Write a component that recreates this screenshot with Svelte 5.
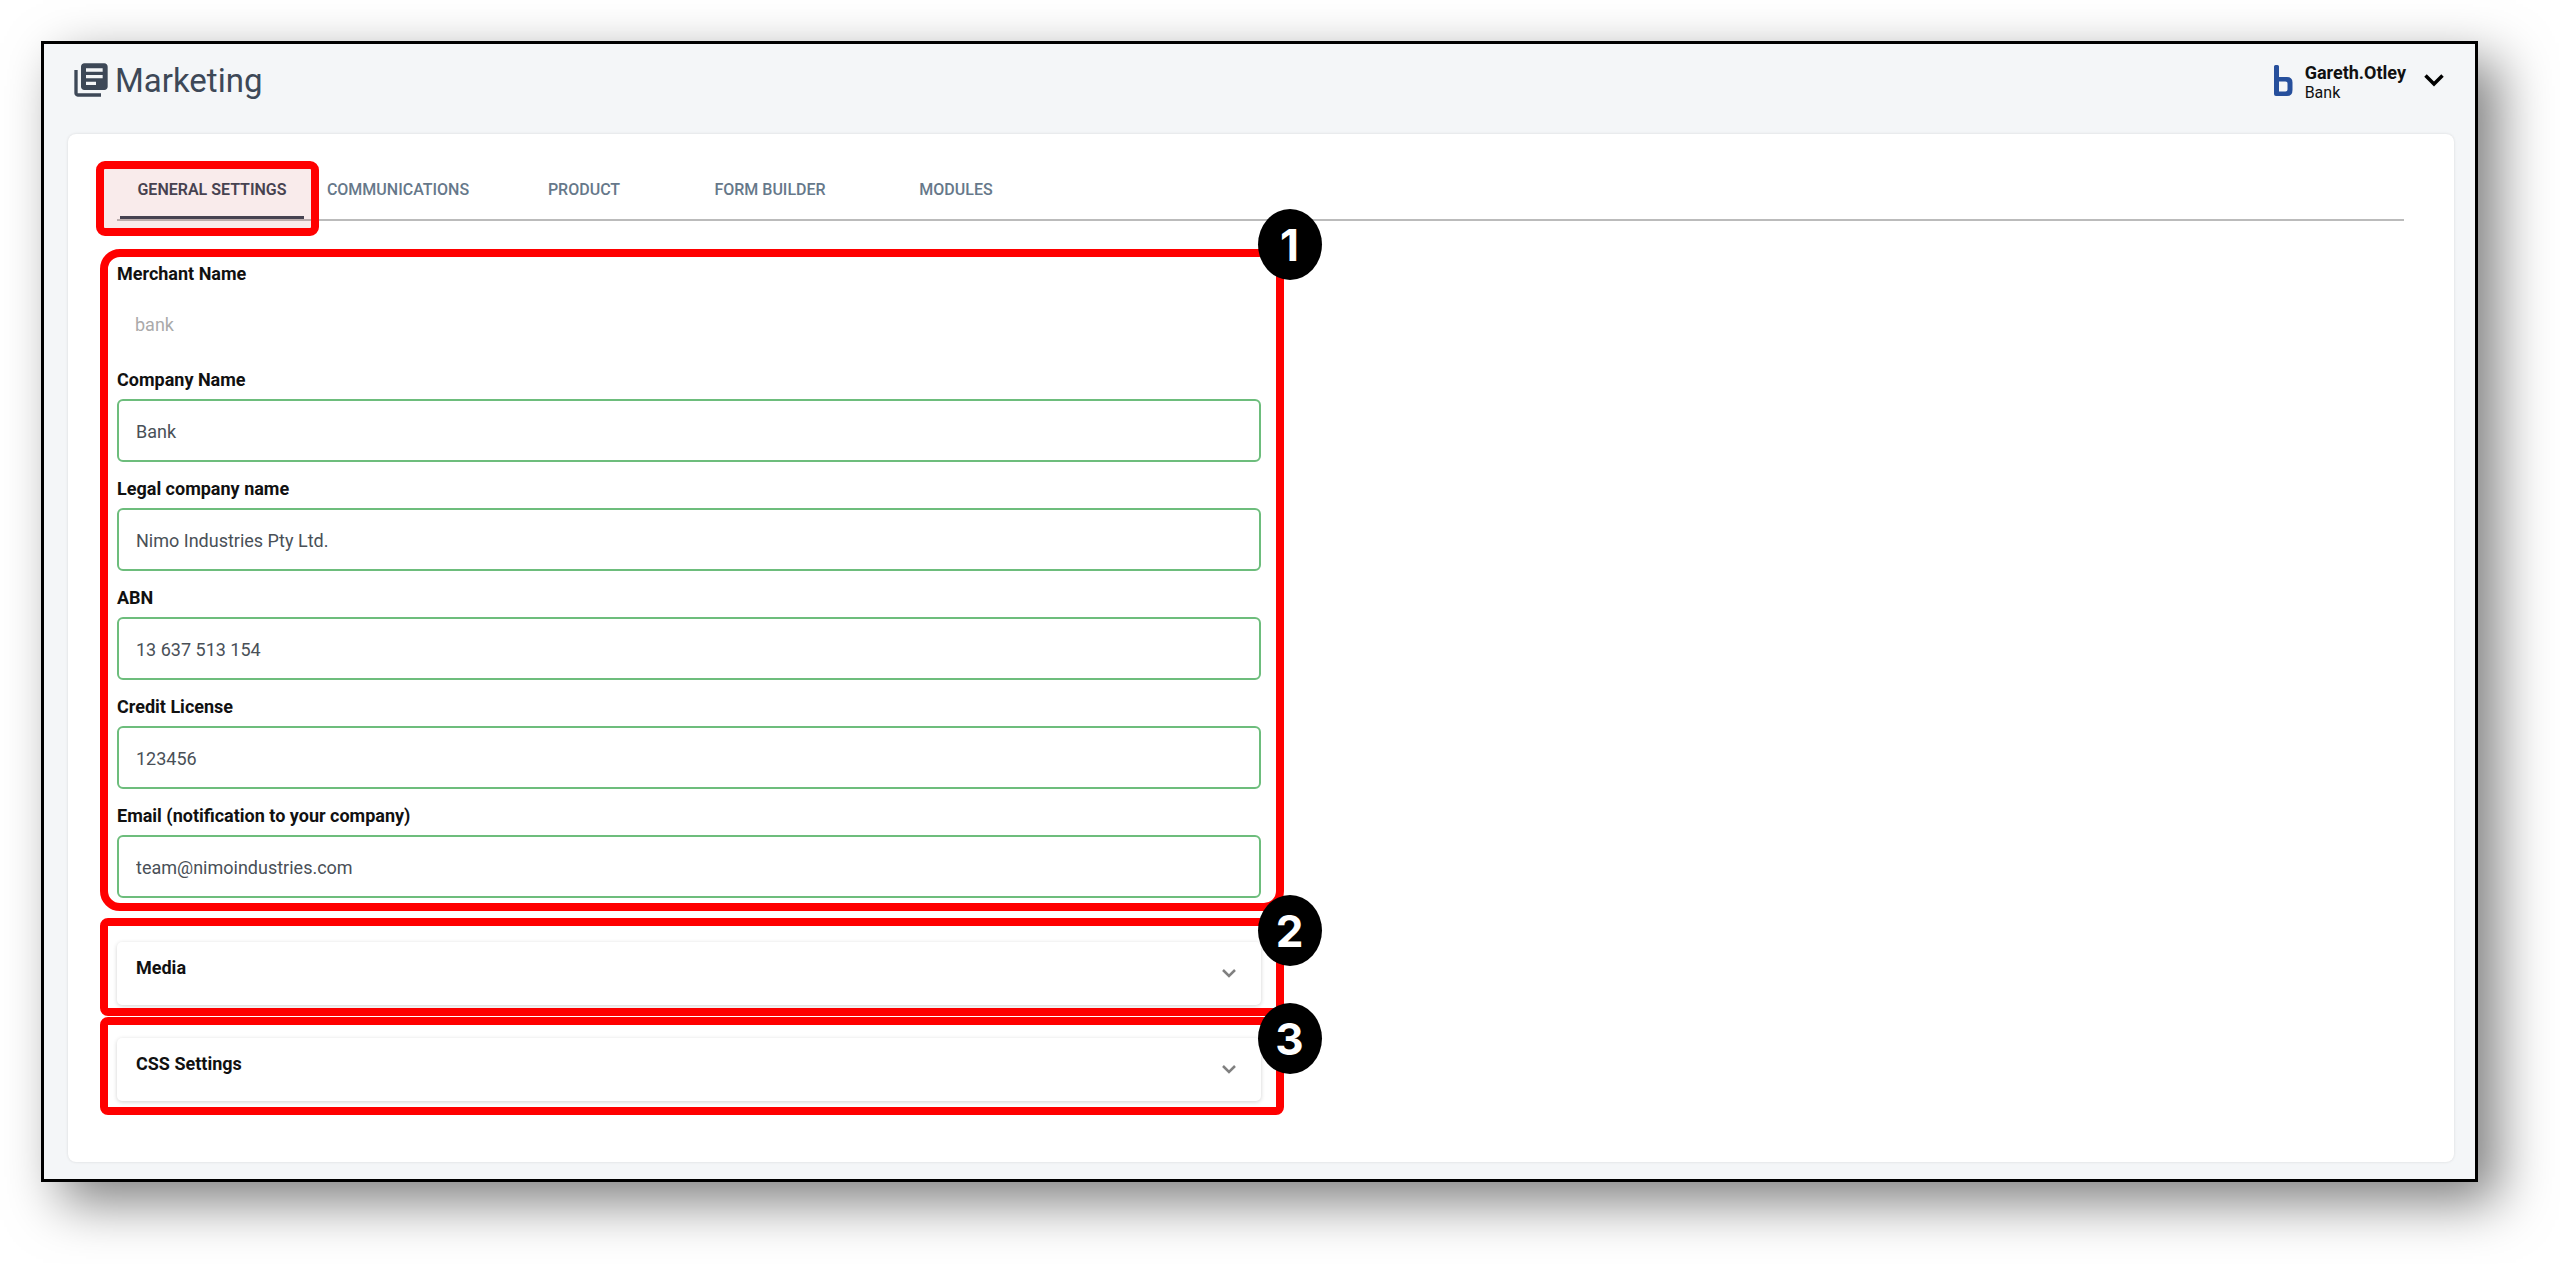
<script lang="ts">
  type Field = { id: string; label: string; value: string; type?: string; disabled?: boolean };

  const tabs = ['General Settings', 'Communications', 'Product', 'Form Builder', 'Modules'];
  let activeTab = $state(tabs[0]);

  let fields = $state<Field[]>([
    { id: 'merchant-name', label: 'Merchant Name', value: 'bank', disabled: true },
    { id: 'company-name', label: 'Company Name', value: 'Bank' },
    { id: 'legal-name', label: 'Legal company name', value: 'Nimo Industries Pty Ltd.' },
    { id: 'abn', label: 'ABN', value: '13 637 513 154' },
    { id: 'credit-license', label: 'Credit License', value: '123456' },
    { id: 'email', label: 'Email (notification to your company)', value: 'team@nimoindustries.com', type: 'email' },
  ]);
</script>

{#snippet panel(title: string)}
  <button class="panel" type="button" aria-expanded="false">
    <span>{title}</span>
    <svg width="14" height="9" viewBox="0 0 14 9" aria-hidden="true">
      <path d="M1 1l6 6 6-6" fill="none" stroke="#808080" stroke-width="2.500" />
    </svg>
  </button>
{/snippet}

<div class="page">
  <div class="window">
    <header>
      <h1>
        <svg width="40" height="40" viewBox="0 0 24 24" aria-hidden="true">
          <path
            fill="currentColor"
            d="M4 6H2v14c0 1.1.9 2 2 2h14v-2H4V6zm16-4H8c-1.1 0-2 .9-2 2v12c0 1.1.9 2 2 2h12c1.1 0 2-.9 2-2V4c0-1.1-.9-2-2-2zm-1 9H9V9h10v2zm-4 4H9v-2h6v2zm4-8H9V5h10v2z"
          />
        </svg>
        Marketing
      </h1>

      <button class="account" type="button">
        <svg width="19" height="31" viewBox="0 0 19 31" aria-hidden="true">
          <path
            fill="#264f9c"
            fill-rule="evenodd"
            d="M0 1.500Q0 0 1.500 0H3.500Q5 0 5 1.500V12H13Q18.500 12 18.500 17.500V25Q18.500 31 13 31H2Q0 31 0 29ZM5 16.500V26.500H11.500Q13.500 26.500 13.500 24.500V18.500Q13.500 16.500 11.500 16.500Z"
          />
        </svg>
        <span class="who">
          <strong>Gareth.Otley</strong>
          <small>Bank</small>
        </span>
        <svg width="20" height="13" viewBox="0 0 20 13" aria-hidden="true">
          <path d="M1.500 1.500L10 10l8.500-8.500" fill="none" stroke="#000" stroke-width="3.500" />
        </svg>
      </button>
    </header>

    <main>
      <nav>
        {#each tabs as tab, i (tab)}
          <button
            type="button"
            class:active={tab === activeTab}
            class:marked={i === 0}
            onclick={() => (activeTab = tab)}
          >
            {tab}
          </button>
        {/each}
      </nav>

      <div class="steps">
        <section class="step form">
          <span class="badge">1</span>
          {#each fields as field (field.id)}
            <div class="field">
              <label for={field.id}>{field.label}</label>
              <input id={field.id} type={field.type ?? 'text'} bind:value={field.value} disabled={field.disabled} />
            </div>
          {/each}
        </section>

        <section class="step media">
          <span class="badge">2</span>
          {@render panel('Media')}
        </section>

        <section class="step css">
          <span class="badge">3</span>
          {@render panel('CSS Settings')}
        </section>
      </div>
    </main>
  </div>
</div>

<style>
  :global(body) { background: #fff; }

  * { box-sizing: border-box; }

  button, input { font: inherit; color: inherit; }
  button { background: none; border: 0; padding: 0; cursor: pointer; }

  /* extra room on the right and bottom for the drop shadow */
  .page { padding: 41px 82px 82px 41px; }

  .window {
    padding: 0 21px 17px 24px;
    background: #f4f6f8;
    border: 3px solid #000;
    box-shadow: 20px 20px 50px rgba(0, 0, 0, 0.5);
    font-family: Roboto, sans-serif;
    font-size: 18px;
  }

  header { display: flex; justify-content: space-between; height: 90px; }

  h1 {
    display: flex; align-items: center; gap: 4px;
    height: 72px; margin: 0 0 0 3px;
    color: #3d4857; font-size: 33px; font-weight: 400;
  }

  .account { display: flex; align-items: center; height: 72px; margin-right: 10px; text-align: left; }
  .who { display: flex; flex-direction: column; margin: 5px 18px 0 12px; line-height: 20px; color: #111; }
  .who strong { font-weight: 700; }
  .who small { font-size: 16px; }

  main {
    padding: 25px 50px 47px 49px;
    background: #fff;
    border-radius: 8px;
    box-shadow: 0 0 3px rgba(0, 0, 0, 0.12);
  }

  nav { display: flex; padding-left: 2px; border-bottom: 2px solid #bbb; }
  nav button {
    position: relative;
    width: 186px; height: 60px;
    color: #66788a; font-size: 16px; font-weight: 500; text-transform: uppercase;
  }
  nav .active { color: #3d4857; font-weight: 600; }
  nav .active::after {
    content: ''; position: absolute; inset: auto 1px 0;
    height: 3px; background: #3d4857;
  }
  nav .marked::before {
    content: ''; position: absolute; inset: 2px -14px -17px -23px; z-index: 1;
    background: rgba(180, 0, 0, 0.08); background-clip: padding-box;
    border: 8px solid #f00; border-radius: 9px;
  }

  .steps { width: 50%; margin-top: 28px; }
  .step {
    position: relative;
    margin: 0 -23px 0 -17px; padding: 0 15px 0 9px;
    border: 8px solid #f00; border-radius: 8px;
  }
  .form { padding-top: 3px; padding-bottom: 5px; border-radius: 20px; }
  .media { margin-top: 7px; padding-top: 16px; padding-bottom: 3px; }
  .css { margin-top: 1px; padding-top: 13px; padding-bottom: 6px; }

  .badge {
    position: absolute; top: -48px; right: -46px; z-index: 1;
    display: grid; place-items: center;
    width: 64px; height: 71px;
    background: #000; border-radius: 50%;
    color: #fff; font: 700 44px Inter, sans-serif;
  }
  .media .badge { top: -31px; }
  .css .badge { top: -22px; }

  .field + .field { margin-top: 13px; }
  label { display: block; margin-bottom: 6px; color: #111; font-weight: 700; line-height: 27px; }
  input {
    display: block; width: 100%; height: 63px; padding: 2px 17px 0;
    background: #fff; border: 2px solid #6dbd7c; border-radius: 6px;
    color: #495057;
  }
  input:disabled { height: 60px; border-color: transparent; padding: 2px 16px 0; color: #aaa; }

  .panel {
    display: flex; align-items: center; justify-content: space-between;
    width: 100%; height: 63px; padding: 0 25px 0 19px;
    border-radius: 5px; box-shadow: 0 1px 4px rgba(0, 0, 0, 0.18);
    color: #111; font-weight: 700;
  }
  .panel span { margin-bottom: 12px; }
</style>
